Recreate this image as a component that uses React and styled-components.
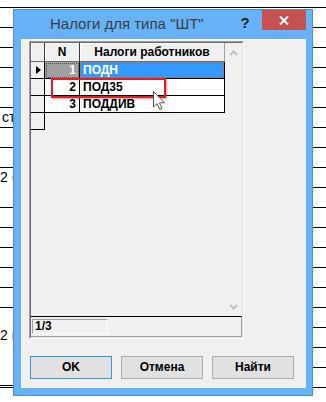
import React from "react";
import styled, { createGlobalStyle } from "styled-components";

const Global = createGlobalStyle`
  html, body { margin: 0; padding: 0; background: #fff; }
  body { width: 326px; height: 402px; overflow: hidden; }
`;

const Page = styled.div`
  position: relative;
  width: 326px;
  height: 402px;
  overflow: hidden;
  background: #fff;
  font-family: "Liberation Sans", Arial, sans-serif;
`;

const TopRule = styled.div`
  height: 7px;
  border-bottom: 1px solid #000;
`;

const Body = styled.div`
  display: flex;
  align-items: flex-start;
`;

const Strip = styled.div`
  width: 13px;
  flex: none;
  overflow: hidden;
  display: flex;
  flex-direction: column;
`;

const SheetCell = styled.div`
  height: ${(p) => p.$span * 20 - 1}px;
  border-bottom: 1px solid #000;
  box-sizing: content-box;
  padding-top: ${(p) => p.$top || 0}px;
  margin-bottom: ${(p) => -(p.$top || 0)}px;
  font-size: 14px;
  line-height: 19px;
  color: #000;
  white-space: nowrap;
  padding-left: ${(p) => p.$left || 0}px;
`;

const Tint = styled.span`
  color: ${(p) => p.$c};
`;

const Window = styled.div`
  width: 300px;
  height: 387px;
  flex: none;
  box-sizing: border-box;
  margin-top: 1px;
  border: 1px solid #4a8fd8;
  background: #67b2f7;
  padding: 0 6px 7px 7px;
  display: flex;
  flex-direction: column;
`;

const TitleBar = styled.div`
  height: 29px;
  flex: none;
  display: flex;
  align-items: flex-start;
`;

const Title = styled.div`
  flex: 1;
  padding: 4px 0 0 29px;
  font-size: 15px;
  line-height: 19px;
  color: #3a3f46;
  white-space: nowrap;
`;

const Help = styled.div`
  width: 10px;
  margin: 4px 12px 0 0;
  font-size: 15px;
  font-weight: bold;
  line-height: 17px;
  color: #1e1e1e;
  text-align: center;
`;

const Close = styled.div`
  width: 44px;
  height: 20px;
  background: #c75050;
  display: flex;
  align-items: center;
  justify-content: center;
`;

const Panel = styled.div`
  flex: 1;
  background: #f0f0f0;
  padding: 2px 0 0 8px;
  display: flex;
  flex-direction: column;
`;

const Grid = styled.div`
  width: 215px;
  height: 298px;
  box-sizing: border-box;
  border: 1px solid;
  border-color: #a0a0a0 #fff #fff #a0a0a0;
  display: flex;
`;

const GridInner = styled.div`
  flex: 1;
  border: 1px solid;
  border-color: #696969 #e3e3e3 #e3e3e3 #696969;
  display: flex;
  flex-direction: column;
`;

const GridMain = styled.div`
  height: 274px;
  display: flex;
`;

const Table = styled.div`
  width: 194px;
  display: flex;
  flex-direction: column;
`;

const Row = styled.div`
  display: grid;
  grid-template-columns: 14px 35px 145px;
  height: ${(p) => p.$h}px;
`;

const HeadCell = styled.div`
  box-sizing: border-box;
  border-right: 1px solid ${(p) => (p.$last ? "#a0a0a0" : "#3c3c3c")};
  border-bottom: 1px solid #6a6a6a;
  box-shadow: inset 1px 1px #fff;
  background: #f0f0f0;
  font-size: 12px;
  font-weight: bold;
  line-height: 18px;
  text-align: center;
  color: #000;
`;

const Indicator = styled.div`
  box-sizing: border-box;
  border-right: 1px solid #000;
  border-bottom: 1px solid #000;
  background: #f0f0f0;
  display: flex;
  align-items: center;
  justify-content: center;
  padding-left: 1px;
`;

const DataCell = styled.div`
  box-sizing: border-box;
  border-right: 1px solid #000;
  border-bottom: 1px solid #000;
  background: ${(p) => p.$bg || "#fff"};
  color: ${(p) => p.$fg || "#000"};
  outline: ${(p) => (p.$focus ? `1px dotted ${p.$focus}` : "none")};
  outline-offset: -2px;
  font-size: 12px;
  font-weight: bold;
  line-height: 16px;
  text-align: ${(p) => (p.$num ? "right" : "left")};
  padding: ${(p) => (p.$num ? "0 3px 0 0" : "0 0 0 3px")};
  white-space: nowrap;
`;

const Scroll = styled.div`
  width: 17px;
  background: #f0f0f0;
  display: flex;
  flex-direction: column;
  justify-content: space-between;
  align-items: center;
  padding: 7px 0 6px;
  box-sizing: border-box;
`;

const Status = styled.div`
  height: 19px;
  border-top: 1px solid #000;
  border-right: 1px solid #a0a0a0;
  border-bottom: 1px solid #a0a0a0;
  box-sizing: content-box;
  display: flex;
  align-items: flex-start;
`;

const StatusPane = styled.div`
  width: 76px;
  height: 15px;
  margin: 2px 0 0 1px;
  box-sizing: border-box;
  border: 1px solid;
  border-color: #a0a0a0 #fff #fff #a0a0a0;
  font-size: 12px;
  font-weight: bold;
  line-height: 13px;
  padding-left: 2px;
  color: #000;
`;

const Buttons = styled.div`
  display: flex;
  gap: 9px;
  margin: 17px 0 0 1px;
`;

const Button = styled.div`
  width: 82px;
  height: 23px;
  box-sizing: border-box;
  border: 1px solid ${(p) => (p.$default ? "#3393e8" : "#adadad")};
  background: #e1e1e1;
  font-size: 12px;
  font-weight: bold;
  line-height: 21px;
  text-align: center;
  color: #000;
`;

const Highlight = styled.div`
  position: absolute;
  left: 51px;
  top: 78px;
  width: 115px;
  height: 20px;
  box-sizing: border-box;
  border: 2px solid #ea1a22;
  box-shadow: 1px 1px 2px rgba(0, 0, 0, 0.35);
`;

const Cursor = styled.svg`
  position: absolute;
  left: 153px;
  top: 91px;
`;

const leftCells = [
  { s: 1 }, { s: 1 }, { s: 1 }, { s: 1 }, { s: 1 },
  { s: 1, t: "ст", l: 2 },
  { s: 1 }, { s: 1 },
  { s: 2, t: "2 ", x: "(", c: "#c05a00" },
  { s: 1 }, { s: 1 }, { s: 1 }, { s: 1 }, { s: 1 },
  { s: 3, t: "2 ", x: "г", c: "#5a1048", top: 18 },
  { s: 1 }, { s: 1 },
];

const rows = [
  { n: 1, name: "ПОДН", sel: true },
  { n: 2, name: "ПОД35" },
  { n: 3, name: "ПОДДИВ" },
];

function Chevron({ up }) {
  return (
    <svg width="9" height="6" viewBox="0 0 9 6">
      <path
        d={up ? "M1 5 L4.5 1.5 L8 5" : "M1 1 L4.5 4.5 L8 1"}
        fill="none"
        stroke="#c4c4c4"
        strokeWidth="2"
      />
    </svg>
  );
}

export default function App() {
  return (
    <Page>
      <Global />
      <TopRule />
      <Body>
        <Strip>
          {leftCells.map((c, i) => (
            <SheetCell key={i} $span={c.s} $top={c.top} $left={c.l}>
              {c.t}
              {c.x && <Tint $c={c.c}>{c.x}</Tint>}
            </SheetCell>
          ))}
        </Strip>
        <Window>
          <TitleBar>
            <Title>Налоги для типа "ШТ"</Title>
            <Help>?</Help>
            <Close>
              <svg width="10" height="9" viewBox="0 0 10 9">
                <path d="M1 0.5 L9 8.5 M9 0.5 L1 8.5" stroke="#fff" strokeWidth="2" />
              </svg>
            </Close>
          </TitleBar>
          <Panel>
            <Grid>
              <GridInner>
                <GridMain>
                  <Table>
                    <Row $h={19}>
                      <HeadCell />
                      <HeadCell>N</HeadCell>
                      <HeadCell $last>Налоги работников</HeadCell>
                    </Row>
                    {rows.map((r) => (
                      <Row key={r.n} $h={17}>
                        <Indicator>
                          {r.sel && (
                            <svg width="5" height="8" viewBox="0 0 5 8">
                              <path d="M0 0 L5 4 L0 8 Z" fill="#000" />
                            </svg>
                          )}
                        </Indicator>
                        <DataCell
                          $num
                          $bg={r.sel ? "#a0a0a0" : undefined}
                          $fg={r.sel ? "#fff" : undefined}
                          $focus={r.sel ? "#505050" : undefined}
                        >
                          {r.n}
                        </DataCell>
                        <DataCell
                          $bg={r.sel ? "#3399ff" : undefined}
                          $fg={r.sel ? "#fff" : undefined}
                          $focus={r.sel ? "#d06a10" : undefined}
                        >
                          {r.name}
                        </DataCell>
                      </Row>
                    ))}
                    <Row $h={17}>
                      <Indicator />
                    </Row>
                  </Table>
                  <Scroll>
                    <Chevron up />
                    <Chevron />
                  </Scroll>
                </GridMain>
                <Status>
                  <StatusPane>1/3</StatusPane>
                </Status>
              </GridInner>
            </Grid>
            <Buttons>
              <Button $default>OK</Button>
              <Button>Отмена</Button>
              <Button>Найти</Button>
            </Buttons>
          </Panel>
        </Window>
        <Strip>
          {Array.from({ length: 20 }).map((_, i) => (
            <SheetCell key={i} $span={1} />
          ))}
        </Strip>
      </Body>
      <Highlight />
      <Cursor width="13" height="20" viewBox="0 0 13 20">
        <path
          d="M0.5 0.5 L0.5 16 L4.2 12.6 L6.8 18.6 L9 17.6 L6.5 11.8 L11.5 11.8 Z"
          fill="#fff"
          stroke="#5a5a5a"
          strokeWidth="1"
          strokeLinejoin="round"
        />
      </Cursor>
    </Page>
  );
}
